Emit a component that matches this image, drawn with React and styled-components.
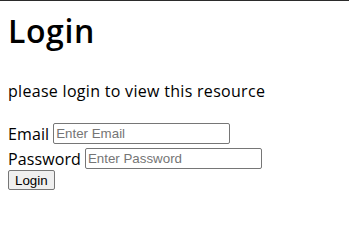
import React from "react";
import styled, { createGlobalStyle } from "styled-components";

const GlobalStyle = createGlobalStyle`
  html {
    border-top: 1px solid #2b2b2b;
  }
  body {
    margin: 8px;
    background: #fff;
    color: #000;
    font-family: "Open Sans", "Noto Sans", sans-serif;
    font-size: 16px;
    letter-spacing: 0.3px;
  }
`;

const Title = styled.h1`
  margin: 0;
  font-size: 32px;
  font-weight: 600;
  letter-spacing: 0.6px;
`;

const Note = styled.p`
  margin: 28px 0 16px;
`;

const Form = styled.form`
  display: flex;
  flex-direction: column;
  align-items: flex-start;
  margin-top: 19px;
`;

const Field = styled.div`
  display: flex;
  align-items: center;
  gap: 4px;
  height: 25px;
`;

const Label = styled.label`
  font-size: 16px;
  letter-spacing: 0.1px;
`;

const Input = styled.input`
  box-sizing: border-box;
  width: 177px;
  height: 21px;
  padding: 1px 2px;
  border: 1px solid #767676;
  border-radius: 2px;
  font-family: "Liberation Sans", Arial, sans-serif;
  font-size: 13.33px;
  letter-spacing: 0;
  &::placeholder {
    color: #757575;
  }
`;

const Button = styled.button`
  box-sizing: border-box;
  height: 20px;
  margin-top: -1px;
  padding: 0 6px;
  border: 1px solid #767676;
  border-radius: 2px;
  background: #efefef;
  font-family: "Liberation Sans", Arial, sans-serif;
  font-size: 13.33px;
  letter-spacing: 0;
  color: #000;
`;

export default function App() {
  return (
    <>
      <GlobalStyle />
      <Title>Login</Title>
      <Note>please login to view this resource</Note>
      <Form onSubmit={(e) => e.preventDefault()}>
        <Field>
          <Label htmlFor="email">Email</Label>
          <Input id="email" type="email" placeholder="Enter Email" />
        </Field>
        <Field>
          <Label htmlFor="password">Password</Label>
          <Input id="password" type="password" placeholder="Enter Password" />
        </Field>
        <Button type="submit">Login</Button>
      </Form>
    </>
  );
}
